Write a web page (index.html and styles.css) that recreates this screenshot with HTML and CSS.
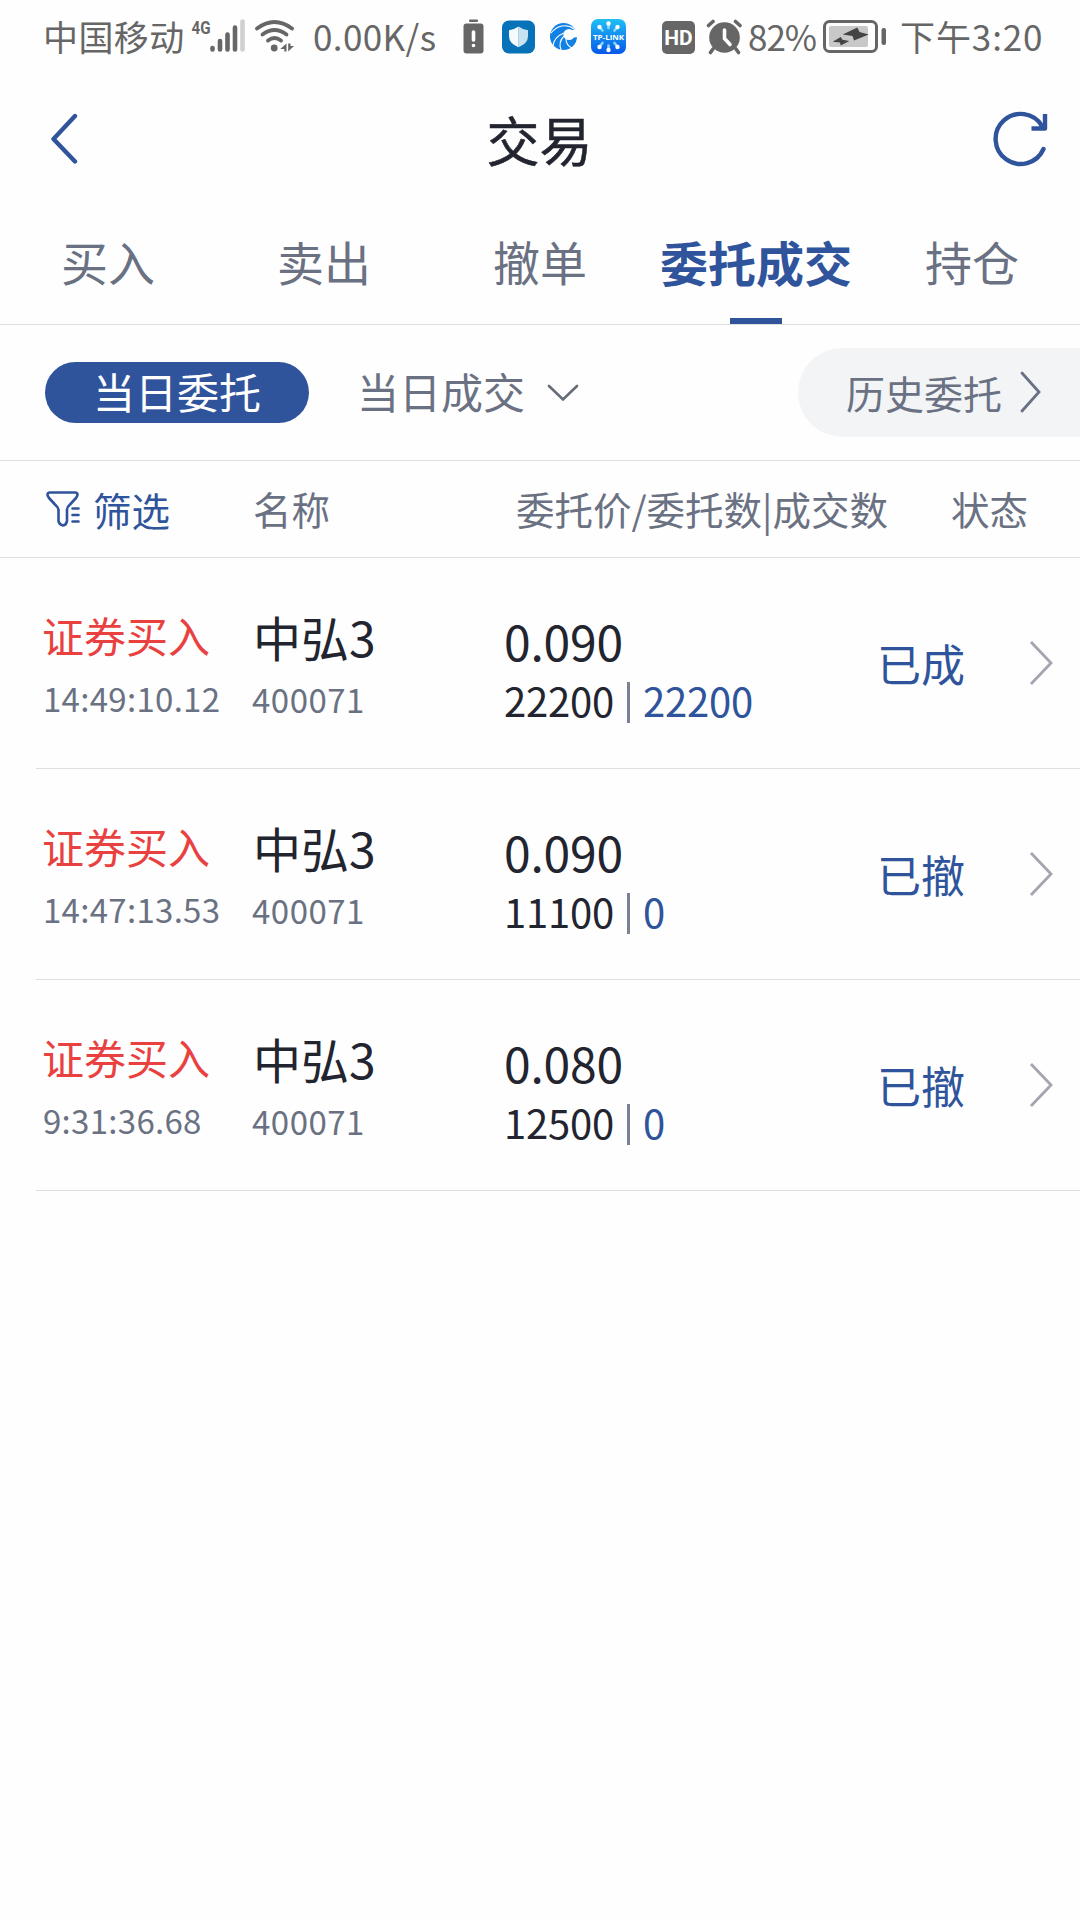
FILE: index.html
```html
<!DOCTYPE html>
<html lang="zh-CN">
<head>
    <meta charset="UTF-8">
    <meta name="viewport" content="width=device-width, initial-scale=1.0">
    <title>交易</title>
    <link rel="stylesheet" href="styles.css">
</head>
<body>
    <div class="statusbar">
        <span class="carrier">中国移动</span>
        <svg class="signal" width="56" height="40" viewBox="190 17 56 40">
            <text x="191.500" y="33.500" class="net" textLength="19" lengthAdjust="spacingAndGlyphs">4G</text>
            <g stroke="#666" stroke-width="4.6" stroke-linecap="round">
                <path d="M212.500 48v1.500M220 41v8.500M227.500 34.500v15M235 27.500v22"/>
                <path d="M242.500 21.500v28" stroke="#d0d0d0"/>
            </g>
        </svg>
        <svg class="wifi" width="42" height="40" viewBox="254 17 42 40">
            <g fill="none" stroke="#666" stroke-width="3.800" stroke-linecap="round">
                <path d="M257 28.500Q274.500 15.500 292 28.500"/>
                <path d="M262.500 34.500Q274.500 25.500 286.500 34.500"/>
                <path d="M268 40.500Q274.500 35.500 281 40.500"/>
            </g>
            <circle cx="274.200" cy="48" r="3.400" fill="#666"/>
            <path fill="#666" d="M286.500 43.500v8h-2.200v-2.500h-4zM288.200 43.500v8l5.800-5.500h-3.500v-2.500z"/>
        </svg>
        <span class="speed">0.00K/s</span>
        <svg class="alert" width="22" height="40" viewBox="462 17 22 40">
            <rect x="469" y="19.500" width="9" height="2.500" rx="1" fill="#666"/>
            <rect x="463.500" y="23.500" width="20" height="30" rx="3" fill="#666"/>
            <path d="M473.500 32v8" stroke="#fff" stroke-width="3.600" stroke-linecap="round"/>
            <circle cx="473.500" cy="45.500" r="1.800" fill="#fff"/>
        </svg>
        <svg class="shield" width="34" height="40" viewBox="502 17 34 40">
            <rect x="502" y="20.500" width="33" height="33" rx="7" fill="#0872b8"/>
            <path d="M518.500 26.500q5 3.500 9.500 3.800v6q0 7-9.500 11z" fill="#c8e2f2"/>
            <path d="M518.500 26.500q-5 3.500-9.500 3.800v6q0 7 9.500 11z" fill="#f4fafd"/>
        </svg>
        <svg class="swirl" width="28" height="40" viewBox="550 17 28 40">
            <circle cx="563.500" cy="36.500" r="13.500" fill="#1281e4"/>
            <circle cx="569" cy="34.500" r="5.600" fill="#fff"/>
            <path d="M570 31l8-3v9l-8 1z" fill="#fff"/>
            <g fill="none" stroke="#fff" stroke-width="1.100">
                <path d="M551 33q5-6 11-7 7-1 12 3"/>
                <path d="M553 46q1-9 11-13"/>
                <path d="M561 50q-3-8 3-14"/>
                <path d="M572 48q-6-3-6-9"/>
            </g>
        </svg>
        <svg class="tplink" width="36" height="40" viewBox="591 17 36 40">
            <defs>
                <linearGradient id="tp" x1="0" y1="0" x2="0" y2="1">
                    <stop offset="0" stop-color="#1fc0f5"/>
                    <stop offset="1" stop-color="#0757ea"/>
                </linearGradient>
            </defs>
            <rect x="591" y="19" width="35" height="35" rx="7" fill="url(#tp)"/>
            <g stroke="#8fd4fc" stroke-width="2.600" stroke-linecap="round">
                <path d="M608.500 24v4M600 27.500l2.500 3M617 27.500l-2.500 3M608.500 49.500v-4M600 46l2.500-3M617 46l-2.500-3"/>
            </g>
            <g fill="#fff">
                <circle cx="608.500" cy="23.500" r="2.200"/><circle cx="599.500" cy="27" r="2.200"/><circle cx="617.500" cy="27" r="2.200"/>
                <circle cx="608.500" cy="50" r="2.200"/><circle cx="599.500" cy="47" r="2.200"/><circle cx="617.500" cy="47" r="2.200"/>
            </g>
            <text x="593" y="39.500" class="tp-text" textLength="31" lengthAdjust="spacingAndGlyphs">TP-LINK</text>
        </svg>
        <span class="hd">HD</span>
        <svg class="alarm" width="36" height="40" viewBox="706 17 36 40">
            <circle cx="724.500" cy="37.500" r="15.300" fill="#666"/>
            <path d="M708.500 25.500l4.500-4M740 25.500l-4.500-4M713 49l-2.500 3.500M736 49l2.500 3.500" stroke="#666" stroke-width="3.600" stroke-linecap="round"/>
            <path d="M724.500 30v8.500l5.500 6" fill="none" stroke="#fff" stroke-width="3.600" stroke-linecap="round"/>
        </svg>
        <span class="percent">82%</span>
        <svg class="battery" width="64" height="40" viewBox="823 17 64 40">
            <rect x="824.500" y="21.500" width="52" height="30" rx="5" fill="none" stroke="#666" stroke-width="3"/>
            <rect x="829" y="26" width="39" height="21" rx="2" fill="#c8c8c8"/>
            <rect x="881.500" y="28" width="4.500" height="17" rx="2" fill="#666"/>
            <path d="M842.700 34.500L857.300 27.500 859.500 32 868.700 34.500 854 40.500 852.500 36zM832.700 41.700L840.700 37 842.500 39.700 849.300 41 840.700 45.500 840 42.500z" fill="#444"/>
        </svg>
        <span class="clock">下午3:20</span>
    </div>

    <div class="header">
        <svg class="back" width="30" height="54" viewBox="0 0 30 54">
            <path d="M27 4L5.500 27 27 49.500" fill="none" stroke="#2f549c" stroke-width="4.400" stroke-linecap="round" stroke-linejoin="round"/>
        </svg>
        <h1>交易</h1>
        <svg class="refresh" width="58" height="58" viewBox="0 0 58 58">
            <g fill="none" stroke="#2f549c" stroke-width="4.400">
                <path d="M51.500 39A25 25 0 1 1 50 16" stroke-linecap="round"/>
                <path d="M53 4v14.500H39.500" stroke-linejoin="round"/>
            </g>
        </svg>
    </div>

    <div class="tabs">
        <a>买入</a>
        <a>卖出</a>
        <a>撤单</a>
        <a class="active">委托成交</a>
        <a>持仓</a>
    </div>

    <div class="subtabs">
        <span class="today">当日委托</span>
        <span class="deals">当日成交</span>
        <svg class="down" width="34" height="20" viewBox="0 0 34 20">
            <path d="M3 3l14 13.500L31 3" fill="none" stroke="#666b78" stroke-width="2.600" stroke-linecap="round"/>
        </svg>
        <div class="history">
            <span>历史委托</span>
            <svg width="24" height="42" viewBox="0 0 24 42">
                <path d="M3 2l17 19L3 40" fill="none" stroke="#6a7084" stroke-width="2.800" stroke-linecap="round"/>
            </svg>
        </div>
    </div>

    <div class="columns">
        <div class="filter">
            <svg width="36" height="38" viewBox="0 0 36 38">
                <g fill="none" stroke="#2f549c" stroke-width="2.600" stroke-linecap="round" stroke-linejoin="round">
                    <path d="M12.500 31V19.500Q12 17 9 14.500L3 8Q-.5 3 4 2.500h25q4.500.500 1 5.500l-6 6.500q-3 2.500-3 5V31q-.500 4-4 4.500-4-1-4.500-4.500z"/>
                    <path d="M26.500 18.500h6M26.500 25h6M26.500 31.500h6"/>
                </g>
            </svg>
            <span>筛选</span>
        </div>
        <span>名称</span>
        <span class="col-price">委托价/委托数|成交数</span>
        <span class="col-status">状态</span>
    </div>

    <div class="list">
        <div class="row">
            <div class="kind">
                <p class="action">证券买入</p>
                <p class="time">14:49:10.12</p>
            </div>
            <div class="stock">
                <p class="name">中弘3</p>
                <p class="code">400071</p>
            </div>
            <div class="amount">
                <p class="price">0.090</p>
                <p class="qty">22200<i></i><b>22200</b></p>
            </div>
            <span class="state">已成</span>
            <svg class="more" width="26" height="46" viewBox="0 0 26 46">
                <path d="M2 2l20 21L2 44" fill="none" stroke="#a3a6b0" stroke-width="2.800"/>
            </svg>
        </div>
        <div class="row">
            <div class="kind">
                <p class="action">证券买入</p>
                <p class="time">14:47:13.53</p>
            </div>
            <div class="stock">
                <p class="name">中弘3</p>
                <p class="code">400071</p>
            </div>
            <div class="amount">
                <p class="price">0.090</p>
                <p class="qty">11100<i></i><b>0</b></p>
            </div>
            <span class="state">已撤</span>
            <svg class="more" width="26" height="46" viewBox="0 0 26 46">
                <path d="M2 2l20 21L2 44" fill="none" stroke="#a3a6b0" stroke-width="2.800"/>
            </svg>
        </div>
        <div class="row">
            <div class="kind">
                <p class="action">证券买入</p>
                <p class="time">9:31:36.68</p>
            </div>
            <div class="stock">
                <p class="name">中弘3</p>
                <p class="code">400071</p>
            </div>
            <div class="amount">
                <p class="price">0.080</p>
                <p class="qty">12500<i></i><b>0</b></p>
            </div>
            <span class="state">已撤</span>
            <svg class="more" width="26" height="46" viewBox="0 0 26 46">
                <path d="M2 2l20 21L2 44" fill="none" stroke="#a3a6b0" stroke-width="2.800"/>
            </svg>
        </div>
    </div>
</body>
</html>
```
FILE: styles.css
```css
* {
    box-sizing: border-box;
}
body {
    margin: 0;
    width: 1080px;
    min-height: 1920px;
    background-color: #fefefe;
    color: #22252f;
    font-family: "Noto Sans CJK SC", sans-serif;
    overflow-x: hidden;
}
p, h1 {
    margin: 0;
}
svg {
    display: block;
    flex-shrink: 0;
}
span {
    white-space: nowrap;
}

/* status bar */
.statusbar {
    display: flex;
    align-items: center;
    height: 74px;
    padding-left: 43px;
    color: #666;
    font-size: 35px;
    line-height: 72px;
}
.statusbar span {
    flex-shrink: 0;
    height: 74px;
}
.carrier {
    width: 147px;
    letter-spacing: 0.4px;
}
.net {
    font: bold 19px "Roboto", sans-serif;
    fill: #666;
}
.wifi {
    margin-left: 8px;
}
.speed {
    width: 149px;
    padding-left: 17px;
    letter-spacing: 0.4px;
}
.alert {
    margin-left: 17px;
}
.shield {
    margin-left: 18px;
}
.swirl {
    margin-left: 14px;
}
.tplink {
    margin-left: 13px;
}
.tp-text {
    font: bold 7.5px "Open Sans", sans-serif;
    fill: #fff;
}
.statusbar .hd {
    width: 33px;
    height: 33px;
    margin-left: 35px;
    border-radius: 5px;
    background-color: #666;
    color: #fff;
    font: bold 21px/34px "Roboto", sans-serif;
    text-align: center;
}
.alarm {
    margin-left: 11px;
}
.percent {
    width: 81px;
    padding-left: 6px;
    letter-spacing: -1px;
}
.clock {
    padding-left: 13px;
    letter-spacing: 0.9px;
}

/* title */
.header {
    display: flex;
    align-items: center;
    justify-content: space-between;
    height: 130px;
    padding: 0 30px 0 48px;
}
.header h1 {
    font-size: 53px;
    font-weight: 400;
    line-height: 70px;
    margin-left: 9px;
    -webkit-text-stroke: 0.5px #22252f;
}

/* tabs */
.tabs {
    display: grid;
    grid-template-columns: repeat(5, 216px);
    height: 121px;
    border-bottom: 1px solid #dedfe1;
    color: #6a7182;
    font-size: 47px;
    line-height: 114px;
    text-align: center;
}
.tabs a {
    position: relative;
}
.tabs .active {
    color: #2f549c;
    font-size: 48px;
    font-weight: 700;
}
.tabs .active::after {
    content: "";
    position: absolute;
    left: 82px;
    bottom: 0;
    width: 52px;
    height: 6px;
    background-color: #2f549c;
}

/* sub tabs */
.subtabs {
    display: flex;
    align-items: center;
    height: 136px;
    padding-left: 45px;
    border-bottom: 1px solid #dedfe1;
    color: #6a7182;
    font-size: 42px;
}
.today {
    width: 264px;
    height: 61px;
    border-radius: 31px;
    background-color: #2f549c;
    color: #fff;
    line-height: 58px;
    text-align: center;
}
.deals {
    margin-left: 48px;
    line-height: 58px;
    height: 61px;
}
.down {
    margin-left: 21px;
}
.history {
    display: flex;
    align-items: center;
    width: 282px;
    height: 89px;
    margin-left: auto;
    padding-left: 48px;
    border-radius: 45px 0 0 45px;
    background-color: #f2f4f6;
    font-size: 39px;
}
.history span {
    margin-top: -1px;
}
.history svg {
    margin: 0 0 2px 17px;
}

/* column titles */
.columns {
    display: grid;
    grid-template-columns: 207px 263px 435px 1fr;
    height: 97px;
    padding-left: 46px;
    border-bottom: 1px solid #dedfe1;
    color: #6a7182;
    font-size: 38.5px;
    line-height: 95px;
}
.filter {
    display: flex;
    align-items: center;
    gap: 11px;
    color: #2f549c;
}

/* order list */
.row {
    display: grid;
    grid-template-columns: 209px 252px 374px 152px 1fr;
    height: 211px;
    margin-left: 36px;
    padding-left: 6px;
    border-bottom: 1px solid #dedfe1;
}
.action {
    margin-top: 47px;
    color: #e8413f;
    font-size: 42px;
    line-height: 60px;
}
.time, .code {
    color: #6a7182;
    font-size: 33px;
    line-height: 40px;
}
.time {
    margin-top: 13px;
    padding-left: 1px;
    letter-spacing: 0.3px;
}
.name {
    margin-top: 47px;
    font-size: 48px;
    line-height: 62px;
    padding-left: 2px;
}
.code {
    margin-top: 12px;
    padding-left: 1px;
    letter-spacing: 0.5px;
}
.price {
    margin-top: 51px;
    padding-left: 1px;
    font-size: 48px;
    line-height: 62px;
    letter-spacing: -0.2px;
}
.qty {
    display: flex;
    align-items: center;
    margin-top: 2px;
    padding-left: 1px;
    font-size: 40px;
    line-height: 54px;
    letter-spacing: -0.2px;
}
.qty i {
    width: 3px;
    height: 41px;
    margin: 4px 13px 0;
    background-color: #7b8092;
}
.qty b {
    color: #2f549c;
    font-weight: 400;
}
.state {
    color: #2f549c;
    font-size: 44px;
    line-height: 210px;
}
.more {
    margin-top: 82px;
}
```
